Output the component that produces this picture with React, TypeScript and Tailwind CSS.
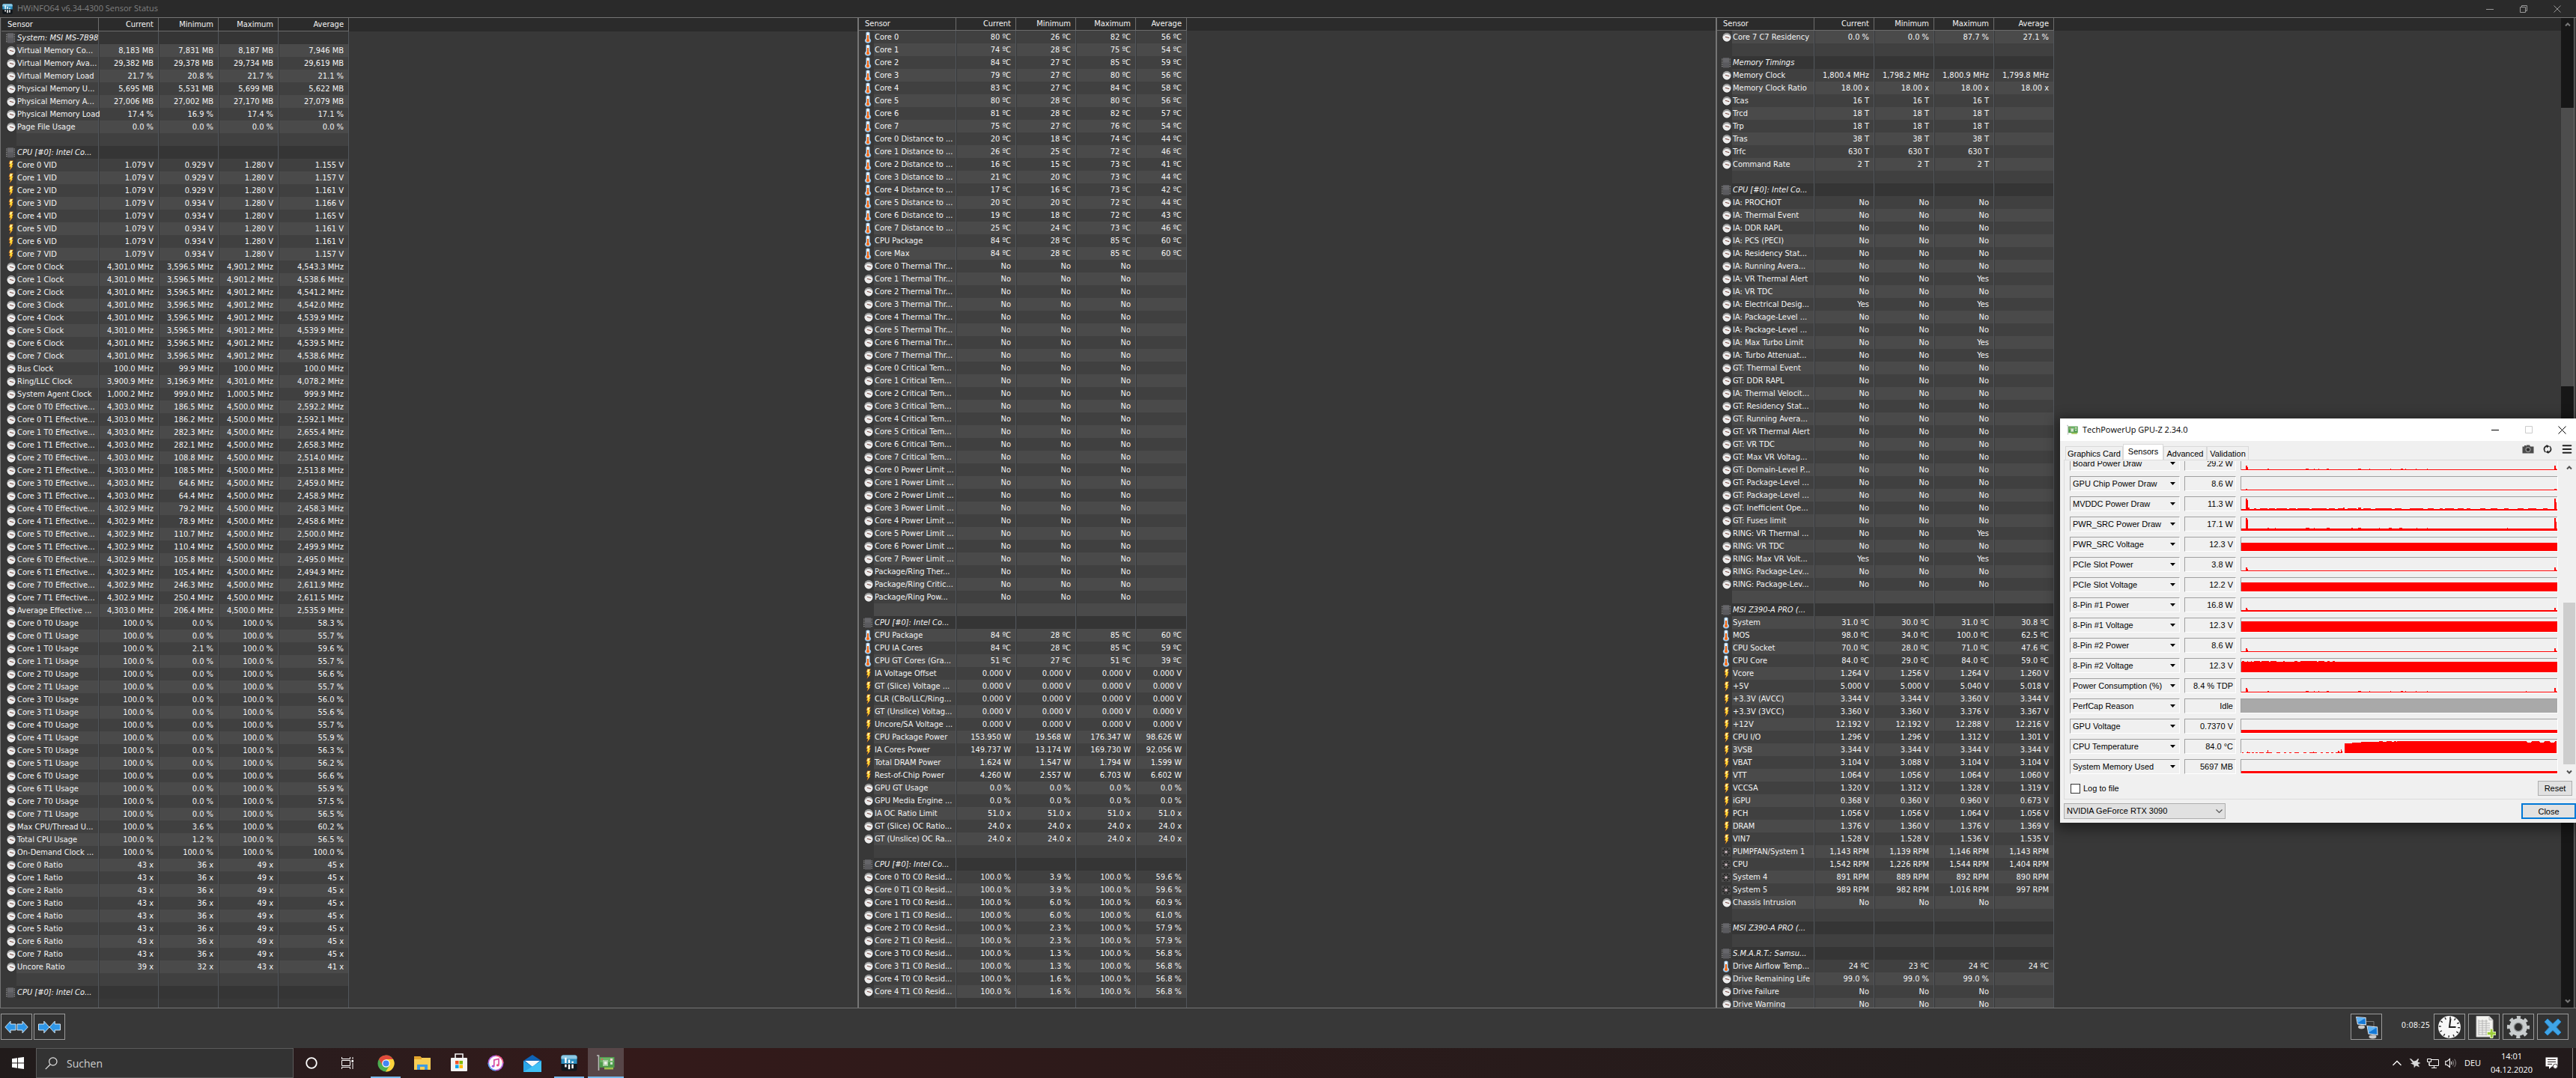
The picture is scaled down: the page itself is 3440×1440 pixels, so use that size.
import React from "react";
import { Menu } from "lucide-react";

type IconName = "gauge" | "bolt" | "temp" | "fan" | "chip";

interface SensorRow {
  kind: "row" | "section" | "blank";
  icon?: IconName;
  name?: string;
  values?: string[];
}

const row = (icon: IconName, name: string, ...values: string[]): SensorRow => ({ kind: "row", icon, name, values });
const g = (name: string, ...values: string[]) => row("gauge", name, ...values);
const v = (name: string, ...values: string[]) => row("bolt", name, ...values);
const t = (name: string, ...values: string[]) => row("temp", name, ...values);
const f = (name: string, ...values: string[]) => row("fan", name, ...values);
const section = (name: string): SensorRow => ({ kind: "section", icon: "chip", name });
const blank: SensorRow = { kind: "blank" };

const withUnit = (unit: string, ...values: string[]) => values.map((x) => `${x} ${unit}`);

const vids = [
  ["0.929", "1.155"], ["0.929", "1.157"], ["0.929", "1.161"], ["0.934", "1.166"],
  ["0.934", "1.165"], ["0.934", "1.161"], ["0.934", "1.161"], ["0.934", "1.157"],
];
const clocks = ["4,543.3", "4,538.6", "4,541.2", "4,542.0", "4,539.9", "4,539.9", "4,539.5", "4,538.6"];
const effective = [
  ["4,303.0", "186.5", "2,592.2"], ["4,303.0", "186.2", "2,592.1"],
  ["4,303.0", "282.3", "2,655.4"], ["4,303.0", "282.1", "2,658.3"],
  ["4,303.0", "108.8", "2,514.0"], ["4,303.0", "108.5", "2,513.8"],
  ["4,303.0", "64.6", "2,459.0"], ["4,303.0", "64.4", "2,458.9"],
  ["4,302.9", "79.2", "2,458.3"], ["4,302.9", "78.9", "2,458.6"],
  ["4,302.9", "110.7", "2,500.0"], ["4,302.9", "110.4", "2,499.9"],
  ["4,302.9", "105.8", "2,495.0"], ["4,302.9", "105.4", "2,494.9"],
  ["4,302.9", "246.3", "2,611.9"], ["4,302.9", "250.4", "2,611.5"],
];
const usage = [
  ["0.0", "58.3"], ["0.0", "55.7"], ["2.1", "59.6"], ["0.0", "55.7"],
  ["0.0", "56.6"], ["0.0", "55.7"], ["0.0", "56.0"], ["0.0", "55.6"],
  ["0.0", "55.7"], ["0.0", "55.9"], ["0.0", "56.3"], ["0.0", "56.2"],
  ["0.0", "56.6"], ["0.0", "55.9"], ["0.0", "57.5"], ["0.0", "56.5"],
];
const cores = [0, 1, 2, 3, 4, 5, 6, 7];
const thread = (i: number) => `Core ${Math.floor(i / 2)} T${i % 2}`;

const leftRows: SensorRow[] = [
  section("System: MSI MS-7B98"),
  g("Virtual Memory Co...", "8,183 MB", "7,831 MB", "8,187 MB", "7,946 MB"),
  g("Virtual Memory Ava...", "29,382 MB", "29,378 MB", "29,734 MB", "29,619 MB"),
  g("Virtual Memory Load", "21.7 %", "20.8 %", "21.7 %", "21.1 %"),
  g("Physical Memory U...", "5,695 MB", "5,531 MB", "5,699 MB", "5,622 MB"),
  g("Physical Memory A...", "27,006 MB", "27,002 MB", "27,170 MB", "27,079 MB"),
  g("Physical Memory Load", "17.4 %", "16.9 %", "17.4 %", "17.1 %"),
  g("Page File Usage", "0.0 %", "0.0 %", "0.0 %", "0.0 %"),
  blank,
  section("CPU [#0]: Intel Co..."),
  ...vids.map(([min, avg], i) => v(`Core ${i} VID`, ...withUnit("V", "1.079", min, "1.280", avg))),
  ...clocks.map((avg, i) => g(`Core ${i} Clock`, ...withUnit("MHz", "4,301.0", "3,596.5", "4,901.2", avg))),
  g("Bus Clock", "100.0 MHz", "99.9 MHz", "100.0 MHz", "100.0 MHz"),
  g("Ring/LLC Clock", "3,900.9 MHz", "3,196.9 MHz", "4,301.0 MHz", "4,078.2 MHz"),
  g("System Agent Clock", "1,000.2 MHz", "999.0 MHz", "1,000.5 MHz", "999.9 MHz"),
  ...effective.map(([cur, min, avg], i) => g(`${thread(i)} Effective...`, ...withUnit("MHz", cur, min, "4,500.0", avg))),
  g("Average Effective ...", "4,303.0 MHz", "206.4 MHz", "4,500.0 MHz", "2,535.9 MHz"),
  ...usage.map(([min, avg], i) => g(`${thread(i)} Usage`, ...withUnit("%", "100.0", min, "100.0", avg))),
  g("Max CPU/Thread U...", "100.0 %", "3.6 %", "100.0 %", "60.2 %"),
  g("Total CPU Usage", "100.0 %", "1.2 %", "100.0 %", "56.5 %"),
  g("On-Demand Clock ...", "100.0 %", "100.0 %", "100.0 %", "100.0 %"),
  ...cores.map((i) => g(`Core ${i} Ratio`, "43 x", "36 x", "49 x", "45 x")),
  g("Uncore Ratio", "39 x", "32 x", "43 x", "41 x"),
  blank,
  section("CPU [#0]: Intel Co..."),
];

const coreTemps = [
  ["80", "26", "82", "56"], ["74", "28", "75", "54"], ["84", "27", "85", "59"], ["79", "27", "80", "56"],
  ["83", "27", "84", "58"], ["80", "28", "80", "56"], ["81", "28", "82", "57"], ["75", "27", "76", "54"],
];
const distances = [
  ["20", "18", "74", "44"], ["26", "25", "72", "46"], ["16", "15", "73", "41"], ["21", "20", "73", "44"],
  ["17", "16", "73", "42"], ["20", "20", "72", "44"], ["19", "18", "72", "43"], ["25", "24", "73", "46"],
];
const residency = [
  ["3.9", "59.6"], ["3.9", "59.6"], ["6.0", "60.9"], ["6.0", "61.0"], ["2.3", "57.9"],
  ["2.3", "57.9"], ["1.3", "56.8"], ["1.3", "56.8"], ["1.6", "56.8"], ["1.6", "56.8"],
];
const no = ["No", "No", "No"];
const zeroV = ["0.000 V", "0.000 V", "0.000 V", "0.000 V"];

const middleRows: SensorRow[] = [
  ...coreTemps.map((x, i) => t(`Core ${i}`, ...withUnit("ºC", ...x))),
  ...distances.map((x, i) => t(`Core ${i} Distance to ...`, ...withUnit("ºC", ...x))),
  t("CPU Package", "84 ºC", "28 ºC", "85 ºC", "60 ºC"),
  t("Core Max", "84 ºC", "28 ºC", "85 ºC", "60 ºC"),
  ...cores.map((i) => g(`Core ${i} Thermal Thr...`, ...no)),
  ...cores.map((i) => g(`Core ${i} Critical Tem...`, ...no)),
  ...cores.map((i) => g(`Core ${i} Power Limit ...`, ...no)),
  g("Package/Ring Ther...", ...no),
  g("Package/Ring Critic...", ...no),
  g("Package/Ring Pow...", ...no),
  blank,
  section("CPU [#0]: Intel Co..."),
  t("CPU Package", "84 ºC", "28 ºC", "85 ºC", "60 ºC"),
  t("CPU IA Cores", "84 ºC", "28 ºC", "85 ºC", "59 ºC"),
  t("CPU GT Cores (Gra...", "51 ºC", "27 ºC", "51 ºC", "39 ºC"),
  v("IA Voltage Offset", ...zeroV),
  v("GT (Slice) Voltage ...", ...zeroV),
  v("CLR (CBo/LLC/Ring...", ...zeroV),
  v("GT (Unslice) Voltag...", ...zeroV),
  v("Uncore/SA Voltage ...", ...zeroV),
  v("CPU Package Power", "153.950 W", "19.568 W", "176.347 W", "98.626 W"),
  v("IA Cores Power", "149.737 W", "13.174 W", "169.730 W", "92.056 W"),
  v("Total DRAM Power", "1.624 W", "1.547 W", "1.794 W", "1.599 W"),
  v("Rest-of-Chip Power", "4.260 W", "2.557 W", "6.703 W", "6.602 W"),
  g("GPU GT Usage", "0.0 %", "0.0 %", "0.0 %", "0.0 %"),
  g("GPU Media Engine ...", "0.0 %", "0.0 %", "0.0 %", "0.0 %"),
  g("IA OC Ratio Limit", "51.0 x", "51.0 x", "51.0 x", "51.0 x"),
  g("GT (Slice) OC Ratio...", "24.0 x", "24.0 x", "24.0 x", "24.0 x"),
  g("GT (Unslice) OC Ra...", "24.0 x", "24.0 x", "24.0 x", "24.0 x"),
  blank,
  section("CPU [#0]: Intel Co..."),
  ...residency.map(([min, avg], i) => g(`${thread(i)} C0 Resid...`, ...withUnit("%", "100.0", min, "100.0", avg))),
];

const rightRows: SensorRow[] = [
  g("Core 7 C7 Residency", "0.0 %", "0.0 %", "87.7 %", "27.1 %"),
  blank,
  section("Memory Timings"),
  g("Memory Clock", "1,800.4 MHz", "1,798.2 MHz", "1,800.9 MHz", "1,799.8 MHz"),
  g("Memory Clock Ratio", "18.00 x", "18.00 x", "18.00 x", "18.00 x"),
  g("Tcas", "16 T", "16 T", "16 T"),
  g("Trcd", "18 T", "18 T", "18 T"),
  g("Trp", "18 T", "18 T", "18 T"),
  g("Tras", "38 T", "38 T", "38 T"),
  g("Trfc", "630 T", "630 T", "630 T"),
  g("Command Rate", "2 T", "2 T", "2 T"),
  blank,
  section("CPU [#0]: Intel Co..."),
  g("IA: PROCHOT", ...no),
  g("IA: Thermal Event", ...no),
  g("IA: DDR RAPL", ...no),
  g("IA: PCS (PECI)", ...no),
  g("IA: Residency Stat...", ...no),
  g("IA: Running Avera...", ...no),
  g("IA: VR Thermal Alert", "No", "No", "Yes"),
  g("IA: VR TDC", ...no),
  g("IA: Electrical Desig...", "Yes", "No", "Yes"),
  g("IA: Package-Level ...", ...no),
  g("IA: Package-Level ...", ...no),
  g("IA: Max Turbo Limit", "No", "No", "Yes"),
  g("IA: Turbo Attenuat...", "No", "No", "Yes"),
  g("GT: Thermal Event", ...no),
  g("GT: DDR RAPL", ...no),
  g("IA: Thermal Velocit...", ...no),
  g("GT: Residency Stat...", ...no),
  g("GT: Running Avera...", ...no),
  g("GT: VR Thermal Alert", ...no),
  g("GT: VR TDC", ...no),
  g("GT: Max VR Voltag...", ...no),
  g("GT: Domain-Level P...", ...no),
  g("GT: Package-Level ...", ...no),
  g("GT: Package-Level ...", ...no),
  g("GT: Inefficient Ope...", ...no),
  g("GT: Fuses limit", ...no),
  g("RING: VR Thermal ...", "No", "No", "Yes"),
  g("RING: VR TDC", ...no),
  g("RING: Max VR Volt...", "Yes", "No", "Yes"),
  g("RING: Package-Lev...", ...no),
  g("RING: Package-Lev...", ...no),
  blank,
  section("MSI Z390-A PRO (..."),
  t("System", "31.0 ºC", "30.0 ºC", "31.0 ºC", "30.8 ºC"),
  t("MOS", "98.0 ºC", "34.0 ºC", "100.0 ºC", "62.5 ºC"),
  t("CPU Socket", "70.0 ºC", "28.0 ºC", "71.0 ºC", "47.6 ºC"),
  t("CPU Core", "84.0 ºC", "29.0 ºC", "84.0 ºC", "59.0 ºC"),
  v("Vcore", "1.264 V", "1.256 V", "1.264 V", "1.260 V"),
  v("+5V", "5.000 V", "5.000 V", "5.040 V", "5.018 V"),
  v("+3.3V (AVCC)", "3.344 V", "3.344 V", "3.360 V", "3.344 V"),
  v("+3.3V (3VCC)", "3.360 V", "3.360 V", "3.376 V", "3.367 V"),
  v("+12V", "12.192 V", "12.192 V", "12.288 V", "12.216 V"),
  v("CPU I/O", "1.296 V", "1.296 V", "1.312 V", "1.301 V"),
  v("3VSB", "3.344 V", "3.344 V", "3.344 V", "3.344 V"),
  v("VBAT", "3.104 V", "3.088 V", "3.104 V", "3.104 V"),
  v("VTT", "1.064 V", "1.056 V", "1.064 V", "1.060 V"),
  v("VCCSA", "1.320 V", "1.312 V", "1.328 V", "1.319 V"),
  v("iGPU", "0.368 V", "0.360 V", "0.960 V", "0.673 V"),
  v("PCH", "1.056 V", "1.056 V", "1.064 V", "1.056 V"),
  v("DRAM", "1.376 V", "1.360 V", "1.376 V", "1.369 V"),
  v("VIN7", "1.528 V", "1.528 V", "1.536 V", "1.535 V"),
  f("PUMPFAN/System 1", "1,143 RPM", "1,139 RPM", "1,146 RPM", "1,143 RPM"),
  f("CPU", "1,542 RPM", "1,226 RPM", "1,544 RPM", "1,404 RPM"),
  f("System 4", "891 RPM", "889 RPM", "892 RPM", "890 RPM"),
  f("System 5", "989 RPM", "982 RPM", "1,016 RPM", "997 RPM"),
  g("Chassis Intrusion", ...no),
  blank,
  section("MSI Z390-A PRO (..."),
  blank,
  section("S.M.A.R.T.: Samsu..."),
  t("Drive Airflow Temp...", "24 ºC", "23 ºC", "24 ºC", "24 ºC"),
  g("Drive Remaining Life", "99.0 %", "99.0 %", "99.0 %"),
  g("Drive Failure", ...no),
  g("Drive Warning", ...no),
];

const SensorIcon: React.FC<{ name: IconName }> = ({ name }) => {
  if (name === "gauge") {
    return (
      <svg className="block size-3.5" viewBox="0 0 14 14">
        <circle cx="7" cy="7" r="6.2" fill="#1f1f1f" />
        <circle cx="7" cy="6.6" r="5.8" fill="#a4a4a4" />
        <circle cx="7" cy="7.2" r="5.2" fill="#ececec" />
        <path d="M3 4.4 A5 5 0 0 1 11 4.4" fill="none" stroke="#4a4a4a" strokeWidth="1" strokeDasharray="1.2 0.7" />
        <path d="M5 6.2 L10.2 7.8" stroke="#7c4a42" strokeWidth="1.1" />
      </svg>
    );
  }
  if (name === "bolt") {
    return (
      <svg className="block size-3.5" viewBox="0 0 14 14">
        <path d="M5.2 0.4 H9.8 L8.2 4.2 H9.8 L8.2 8 H9.4 L4.6 14 L6 9 H4 L5.2 5.2 H3.6 Z" fill="#d9741c" />
        <path d="M5.8 1 H9 L7.4 4.8 H9 L7.4 8.4 H8.4 L5.6 12 L6.6 8.4 H4.9 L6 4.6 H4.6 Z" fill="#ffe23a" />
        <path d="M6 1.2 H8.4 L7 4.4 H5 Z" fill="#fff3b0" />
      </svg>
    );
  }
  if (name === "temp") {
    return (
      <svg className="block h-4 w-3.5" viewBox="0 0 14 16">
        <path d="M3.4 1.4 Q6 -0.6 8.6 1.4 V9.2 Q10.4 11 10.2 12.8 Q9.4 15.8 6 15.8 Q2.6 15.8 1.8 12.8 Q1.6 11 3.4 9.2 Z" fill="#8dbbe0" />
        <path d="M4.4 1.8 Q6 0.8 7.6 1.8 V9.8 Q9 11 8.8 12.6 Q8 14.6 6 14.6 Q4 14.6 3.2 12.6 Q3 11 4.4 9.8 Z" fill="#eef6fc" />
        <rect x="5" y="5" width="2" height="6" fill="#f0640f" />
        <circle cx="6" cy="12" r="2" fill="#f0640f" />
      </svg>
    );
  }
  if (name === "fan") {
    return (
      <svg className="block size-3" viewBox="0 0 12 12">
        <rect width="12" height="12" fill="#4c4c4c" />
        <circle cx="6" cy="6" r="5.4" fill="#262626" />
        <path d="M6 1 V11 M1 6 H11 M2.4 2.4 L9.6 9.6 M9.6 2.4 L2.4 9.6" stroke="#6d6868" strokeWidth="1" />
        <circle cx="6" cy="6" r="1.6" fill="#d8c4cc" />
      </svg>
    );
  }
  return (
    <svg className="block h-3.5 w-3" viewBox="0 0 12 14">
      <path d="M0.8 1.5 V13 M11.2 1.5 V13" stroke="#8c8c8c" strokeWidth="1.6" strokeDasharray="1.2 1.2" />
      <rect x="2" y="0.5" width="8" height="13" fill="#5a5a5e" />
      <rect x="2" y="0.5" width="8" height="6" fill="#66666a" />
    </svg>
  );
};

interface SensorPanelProps {
  rows: SensorRow[];
  frame: string;
  headHeight: string;
  averageWidth: string;
  firstLight?: boolean;
}

const headings = ["Current", "Minimum", "Maximum", "Average"];

const SensorPanel: React.FC<SensorPanelProps> = ({ rows, frame, headHeight, averageWidth, firstLight = false }) => {
  const background = (item: SensorRow, index: number) => {
    if (item.kind === "section") return "bg-[#353535]";
    return (index % 2 === 0) === firstLight ? "bg-[#4a4a4a]" : "bg-[#404040]";
  };

  return (
    <section className={`min-w-0 overflow-hidden ${frame}`}>
      <table className="w-full table-fixed border-separate border-spacing-0 text-[11px] leading-[17px] text-[#f4f4f4]">
        <colgroup>
          <col className="w-5" />
          <col className="w-[110px]" />
          <col className="w-20" />
          <col className="w-20" />
          <col className="w-20" />
          <col className={averageWidth} />
          <col />
        </colgroup>
        <thead>
          <tr className={`bg-[#2b2b2b] ${headHeight}`}>
            <th colSpan={2} className="border-r border-b border-[#6c6c6c] p-0 pl-2 text-left leading-4 font-normal">
              Sensor
            </th>
            {headings.map((heading) => (
              <th key={heading} className="border-r border-b border-[#6c6c6c] p-0 pr-1.5 text-right leading-4 font-normal">
                {heading}
              </th>
            ))}
            <th className="p-0" />
          </tr>
        </thead>
        <tbody>
          {rows.map((item, index) => (
            <tr key={index} className="h-[17px]">
              <td className="p-0 pl-1.5">{item.icon && <SensorIcon name={item.icon} />}</td>
              <td
                className={`border-r border-r-[#51565c] p-0 pl-px whitespace-nowrap ${background(item, index)} ${
                  item.kind === "section" ? "italic" : ""
                }`}
              >
                {item.name}
              </td>
              {headings.map((heading, i) => (
                <td
                  key={heading}
                  className={`border-r border-l border-r-[#51565c] border-l-[#383838] p-0 pr-1.5 text-right whitespace-nowrap ${background(item, index)}`}
                >
                  {item.values?.[i]}
                </td>
              ))}
              <td className="p-0" />
            </tr>
          ))}
          {/* keeps the column lines running to the bottom edge */}
          <tr className="h-10">
            <td className="p-0" />
            <td className="border-r border-r-[#51565c] p-0" />
            {headings.map((heading) => (
              <td key={heading} className="border-r border-r-[#51565c] p-0" />
            ))}
            <td className="p-0" />
          </tr>
        </tbody>
      </table>
    </section>
  );
};

// small bumps shared by the power graphs
const bumps = "M36 17h2v1h-2z M87 17h4v1h-4z M98 17h1v1h-1z M104 17h1v1h-1z M115 17h3v1h-3z M157 17h4v1h-4z M172 17h1v1h-1z M200 17h1v1h-1z M214 17h3v1h-3z M220 17h1v1h-1z M234 17h1v1h-1z M249 17h1v1h-1z";

const spikes = (top: number) =>
  `M7 19V${top}h2V${top + 2}h1V19z M419 19V${top}h2V19z M421 19V${Math.min(top + 5, 17)}h1V19z`;
const fill = (top: number) => `M1 ${top}H423V19H1z`;

interface GpuSensor {
  name: string;
  value: string;
  graph: string;
}

const gpuSensors: GpuSensor[] = [
  { name: "Board Power Draw", value: "29.2 W", graph: fill(18) + spikes(13) + bumps },
  { name: "GPU Chip Power Draw", value: "8.6 W", graph: fill(18) + spikes(17) },
  {
    name: "MVDDC Power Draw",
    value: "11.3 W",
    graph:
      fill(17) + spikes(3) +
      "M10 15h2v2h-2z M18 16h3v1h-3z M26 16h10v1h-10z M38 16h8v1h-8z M48 16h14v1h-14z M65 16h9v1h-9z M76 16h16v1h-16z M95 16h20v1h-20z M118 16h8v1h-8z M130 16h9v1h-9z M137 15h2v1h-2z M143 16h12v1h-12z M157 15h4v2h-4z M164 16h10v1h-10z M180 16h22v1h-22z M206 16h9v1h-9z M226 16h18v1h-18z M250 16h8v1h-8z M266 16h4v1h-4z M273 16h12v1h-12z M290 16h8v1h-8z M302 16h5v1h-5z M320 16h7v1h-7z M334 16h9v1h-9z M352 16h6v1h-6z M370 16h8v1h-8z M384 16h11v1h-11z M404 16h6v1h-6z",
  },
  {
    name: "PWR_SRC Power Draw",
    value: "17.1 W",
    graph:
      fill(16) + spikes(2) +
      "M36 15h2v1h-2z M46 15h1v1h-1z M87 15h5v1h-5z M98 15h1v1h-1z M115 15h4v1h-4z M148 15h2v1h-2z M157 15h4v1h-4z M185 15h1v1h-1z M198 15h4v1h-4z M212 15h4v1h-4z M235 15h1v1h-1z M249 15h1v1h-1z M356 15h1v1h-1z",
  },
  { name: "PWR_SRC Voltage", value: "12.3 V", graph: fill(8) },
  { name: "PCIe Slot Power", value: "3.8 W", graph: fill(18) + spikes(14) },
  { name: "PCIe Slot Voltage", value: "12.2 V", graph: fill(7) },
  { name: "8-Pin #1 Power", value: "16.8 W", graph: fill(17) + spikes(14) },
  { name: "8-Pin #1 Voltage", value: "12.3 V", graph: fill(5) },
  { name: "8-Pin #2 Power", value: "8.6 W", graph: fill(18) + spikes(14) },
  {
    name: "8-Pin #2 Voltage",
    value: "12.3 V",
    graph:
      fill(5) +
      "M2 4h3v1h-3z M9 4h1v1h-1z M14 4h1v1h-1z M18 4h8v1h-8z M28 4h10v1h-10z M40 4h8v1h-8z M57 4h2v1h-2z M72 4h4v1h-4z M80 4h22v1h-22z M104 4h8v1h-8z M116 4h3v1h-3z M123 4h3v1h-3z",
  },
  { name: "Power Consumption (%)", value: "8.4 % TDP", graph: fill(18) + spikes(13) + bumps + "M381 17h1v1h-1z" },
  { name: "PerfCap Reason", value: "Idle", graph: "" },
  { name: "GPU Voltage", value: "0.7370 V", graph: fill(15) },
  {
    name: "CPU Temperature",
    value: "84.0 °C",
    graph:
      "M139 19V6h10V5h12V4h24V3h5v1h5v-1h7v1h3v-1h3v1h1v-1H382v1h1v1h5v-1h1v-1h10v1h1v1h5v-1h1v-1h7v1h1v1h5v-1h1v-1h2V19z M134 19v-5h1v2h1v3z M130 19v-3h2v3z M2 18h2v1h-2z M8 18h5v1h-5z M9 17h1v1h-1z M15 18h3v1h-3z M20 18h3v1h-3z M25 18h6v1h-6z M36 15h1v4h-1z M34 18h8v1h-8z M48 18h5v1h-5z M58 18h3v1h-3z M65 18h3v1h-3z M72 18h6v1h-6z M84 18h4v1h-4z M92 18h10v1h-10z M97 17h1v1h-1z M107 18h3v1h-3z M114 18h4v1h-4z M121 18h3v1h-3z M127 18h7v1h-7z",
  },
  { name: "System Memory Used", value: "5697 MB", graph: fill(16) },
];

const sunken = "border border-t-[#a0a0a0] border-r-white border-b-white border-l-[#a0a0a0]";

const GpuSensorRow: React.FC<GpuSensor> = ({ name, value, graph }) => (
  <div className="flex h-5 shrink-0 gap-1.5">
    <div className="relative w-[147px]">
      <select
        aria-label={name}
        className={`block h-5 w-full appearance-none bg-[#f0f0f0] pl-[3px] text-[11px] leading-4 text-black ${sunken}`}
      >
        <option>{name}</option>
      </select>
      <svg className="pointer-events-none absolute top-2 right-1.5 h-1 w-[7px]" viewBox="0 0 7 4">
        <path d="M0 0 H7 L3.5 4 Z" fill="#000" />
      </svg>
    </div>
    <input
      readOnly
      aria-label={`${name} value`}
      value={value}
      className={`h-5 w-[69px] bg-[#f0f0f0] pr-[3px] text-right text-[11px] leading-4 text-black outline-none ${sunken}`}
    />
    <svg className="h-5 min-w-0 flex-1" viewBox="0 0 424 20" preserveAspectRatio="none" shapeRendering="crispEdges">
      <rect width="424" height="20" fill="#ffffff" />
      <rect width="423" height="19" fill="#a0a0a0" />
      <rect x="1" y="1" width="422" height="18" fill={graph ? "#f0f0f0" : "#a9a9a9"} />
      <path d={graph} fill="#ff0000" />
    </svg>
  </div>
);

const GpuCardIcon: React.FC<{ className: string }> = ({ className }) => (
  <svg className={className} viewBox="0 0 24 24">
    <path d="M0 2 H2.5 V22" fill="none" stroke="#b9bdb9" strokeWidth="1.6" />
    <rect x="3.5" y="4" width="20" height="14" fill="#4f9a4c" />
    <rect x="4.5" y="5" width="18" height="6" fill="#6db367" />
    <rect x="8" y="8" width="7" height="8" fill="#a9cba3" />
    <rect x="10" y="10" width="3.5" height="4" fill="#e9efe6" />
    <rect x="18" y="6" width="3" height="3" fill="#e9d5cf" />
    <rect x="18" y="11" width="3" height="3" fill="#cfe3cb" />
    <rect x="6" y="6" width="2" height="2" fill="#d7635c" />
    <rect x="10" y="18" width="12" height="2.5" fill="#9fc24c" />
  </svg>
);

const Tab: React.FC<{ label: string; selected?: boolean; width: string }> = ({ label, selected, width }) => (
  <button
    role="tab"
    aria-selected={selected ? true : false}
    className={`border border-b-0 border-[#d9d9d9] text-[11px] leading-4 text-black ${width} ${
      selected ? "h-[21px] bg-white pb-0.5" : "h-[18px] bg-[#f0f0f0]"
    }`}
  >
    {label}
  </button>
);

const GpuWindow: React.FC = () => (
  <div className="absolute top-[559px] right-0 w-[689px] bg-[#f0f0f0] font-['Liberation_Sans',Arial,sans-serif] text-black shadow-[0_4px_16px_4px_rgba(0,0,0,0.45)]">
    <div className="flex h-[30px] items-center bg-white pl-[9px] font-['Open_Sans','Noto_Sans',sans-serif] text-[11px]">
      <GpuCardIcon className="mr-1.5 size-[15px]" />
      <h2 className="flex-1">TechPowerUp GPU-Z 2.34.0</h2>
      <button aria-label="Minimize" className="flex h-full w-[45px] items-center justify-center">
        <svg className="size-2.5" viewBox="0 0 10 10"><path d="M0 5.5 H10" stroke="#000" /></svg>
      </button>
      <button aria-label="Maximize" className="flex h-full w-[45px] items-center justify-center">
        <svg className="size-2.5" viewBox="0 0 10 10"><path d="M0.5 0.5 H9.5 V9.5 H0.5 Z" fill="none" stroke="#ccc" /></svg>
      </button>
      <button aria-label="Close window" className="flex h-full w-[41px] items-center justify-center pl-1">
        <svg className="size-[11px]" viewBox="0 0 11 11"><path d="M0.5 0.5 L10.5 10.5 M10.5 0.5 L0.5 10.5" stroke="#000" /></svg>
      </button>
    </div>

    <div className="flex h-[25px] items-end pl-[7px]">
      <div role="tablist" className="flex flex-1 items-end">
        <Tab label="Graphics Card" width="w-[77px]" />
        <Tab label="Sensors" width="w-[54px]" selected />
        <Tab label="Advanced" width="w-[58px]" />
        <Tab label="Validation" width="w-14" />
      </div>
      <div className="flex items-center gap-3 self-start pt-[3px] pr-1">
        <button aria-label="Screenshot">
          <svg className="block h-3 w-4" viewBox="0 0 16 12">
            <path d="M0.5 2.5 H3 V1 H5 V2.5 L6 0.5 H10 L11 2.5 H15.5 V11.5 H0.5 Z" fill="#4b4b4b" />
            <circle cx="8" cy="6.6" r="3.6" fill="#8f8f8f" />
            <circle cx="8" cy="6.6" r="2.2" fill="#2c2c2c" />
          </svg>
        </button>
        <button aria-label="Refresh">
          <svg className="block size-3" viewBox="0 0 12 12">
            <path d="M1.6 7 A4.4 4.4 0 0 1 5.4 1.6 M10.4 5 A4.4 4.4 0 0 1 6.6 10.4" fill="none" stroke="#222" strokeWidth="1.8" />
            <path d="M4.6 0 L8.4 2 L5 4.6 Z M7.4 12 L3.6 10 L7 7.4 Z" fill="#222" />
            <path d="M1.6 7 Q2 9 3.4 10 M10.4 5 Q10 3 8.6 2" fill="none" stroke="#222" strokeWidth="1.4" />
          </svg>
        </button>
        <button aria-label="Menu"><Menu className="block size-4" stroke="#222" strokeWidth={3} /></button>
      </div>
    </div>

    <div className="ml-[5px] border border-r-0 border-[#dcdcdc]">
      <div className="flex h-[424px] overflow-hidden pt-px pl-[7px]">
        <div className="flex min-w-0 flex-1 flex-col justify-end gap-[7px] overflow-hidden pr-[7px] pb-[5px]">
          {gpuSensors.map((sensor) => (
            <GpuSensorRow key={sensor.name} {...sensor} />
          ))}
        </div>
        <div className="mr-px flex w-4 flex-col items-center">
          <svg className="mt-px h-4 w-2 shrink-0" viewBox="0 0 8 16"><path d="M1 9.5 L4 6.5 L7 9.5" fill="none" stroke="#505050" strokeWidth="2" /></svg>
          <div className="mt-[172px] h-[216px] w-full shrink-0 bg-[#cdcdcd]" />
          <svg className="mt-0.5 h-4 w-2 shrink-0" viewBox="0 0 8 16"><path d="M1 6.5 L4 9.5 L7 6.5" fill="none" stroke="#505050" strokeWidth="2" /></svg>
        </div>
      </div>
      <div className="flex h-7 items-center justify-between pr-[5px] pl-2">
        <label className="flex items-center gap-1 text-[11px]">
          <input type="checkbox" className="size-[13px] appearance-none border border-[#333] bg-white" />
          Log to file
        </label>
        <button className="h-5 w-[46px] border border-[#adadad] bg-[#e1e1e1] text-[11px]">Reset</button>
      </div>
    </div>

    <div className="flex h-[31px] items-center justify-between pl-[5px]">
      <div className="relative">
        <select
          aria-label="Graphics card"
          className="block h-[21px] w-[216px] appearance-none border border-[#adadad] bg-[#e1e1e1] pl-[3px] text-[11px]"
        >
          <option>NVIDIA GeForce RTX 3090</option>
        </select>
        <svg className="pointer-events-none absolute top-2 right-1 h-1.5 w-[9px]" viewBox="0 0 9 6">
          <path d="M0.5 0.5 L4.5 4.5 L8.5 0.5" fill="none" stroke="#555" strokeWidth="1.1" />
        </svg>
      </div>
      <button className="h-[21px] w-[73px] border-2 border-[#0078d7] bg-[#e1e1e1] text-[11px] leading-4">Close</button>
    </div>
  </div>
);

const ToolButton: React.FC<{ label: string; children: React.ReactNode }> = ({ label, children }) => (
  <button
    aria-label={label}
    className="flex h-[35px] w-[42px] items-center justify-center border border-[#9a9a9a] bg-[#323232]"
  >
    {children}
  </button>
);

const Toolbar: React.FC = () => (
  <div className="flex h-[54px] shrink-0 items-start justify-between border-t border-[#757575] pt-[7px] pr-2.5 pl-px">
    <div className="flex gap-0.5">
      <ToolButton label="Expand columns">
        <svg className="h-[18px] w-8" viewBox="0 0 32 18">
          <path d="M0.8 9 L8 1.2 V5 H15 V13 H8 V16.8 Z M31.2 9 L24 1.2 V5 H17 V13 H24 V16.8 Z" fill="#2f97e8" stroke="#d3e6f4" />
        </svg>
      </ToolButton>
      <ToolButton label="Shrink columns">
        <svg className="h-[18px] w-8" viewBox="0 0 32 18">
          <path d="M16 9 L8.8 1.2 V5 H1.5 V13 H8.8 V16.8 Z M16 9 L23.2 1.2 V5 H30.5 V13 H23.2 V16.8 Z" fill="#2f97e8" stroke="#d3e6f4" />
        </svg>
      </ToolButton>
    </div>
    <div className="flex items-start gap-1">
      <ToolButton label="Remote sensors">
        <svg className="h-8 w-9" viewBox="0 0 36 32">
          <path d="M18 8.5 H28 V15" fill="none" stroke="#777" strokeWidth="1" />
          <ellipse cx="11.5" cy="16" rx="4.5" ry="2.4" fill="#c9c9c9" />
          <path d="M4 2 L17.5 3 L18 13.5 L6 12.5 Z" fill="#dfe9f2" />
          <path d="M5 3 L16.5 4 L17 12.3 L7 11.5 Z" fill="#1579d6" />
          <path d="M5 3 L16.5 4 L7 10 Z" fill="#62b4f5" />
          <ellipse cx="26.5" cy="29" rx="5" ry="2.4" fill="#c9c9c9" />
          <path d="M18.5 14 L33 15.5 L33.5 27 L20.5 25.6 Z" fill="#dfe9f2" />
          <path d="M19.7 15.2 L32 16.5 L32.4 25.7 L21.5 24.5 Z" fill="#1579d6" />
          <path d="M19.7 15.2 L32 16.5 L21.5 23 Z" fill="#62b4f5" />
        </svg>
      </ToolButton>
      <time className="w-[61px] pt-2 pr-px text-right text-[11px] leading-4 text-[#f0f0f0]">0:08:25</time>
      <ToolButton label="Reset clock">
        <svg className="size-8" viewBox="0 0 32 32">
          <circle cx="16" cy="16" r="15" fill="#f7f7f7" />
          <circle cx="16" cy="16" r="12.6" fill="none" stroke="#2a2a2a" strokeWidth="3" strokeDasharray="1.4 5.2" />
          <path d="M17.5 4.5 L16 16 H24.5" fill="none" stroke="#1d1d1d" strokeWidth="2" />
        </svg>
      </ToolButton>
      <ToolButton label="Start logging">
        <svg className="size-8" viewBox="0 0 32 32">
          <path d="M6 1.5 H23 L28 6.5 V29 H6 Z" fill="#f3f3f0" stroke="#bdbdbd" />
          <path d="M23 1.5 V6.5 H28" fill="#ddd" stroke="#b5b5b5" />
          <path d="M9 8 H21 M9 11 H24 M9 14 H24 M9 17 H24 M9 20 H24 M9 23 H20 M9 26 H20 M9 6 V27 M14 6 V27 M19 6 V27" stroke="#b4b4b4" />
          <path d="M24.5 18.5 H28 V22.5 H32 V26.5 H28 V30.5 H24.5 V26.5 H20.5 V22.5 H24.5 Z" fill="#9ccb3b" stroke="#e6f3c4" />
        </svg>
      </ToolButton>
      <ToolButton label="Settings">
        <svg className="size-8" viewBox="0 0 32 32">
          <circle cx="16" cy="16" r="12.6" fill="none" stroke="#c6cacb" strokeWidth="5" strokeDasharray="4.9 5" strokeDashoffset="2.4" />
          <circle cx="16" cy="16" r="8.6" fill="none" stroke="#c9cdce" strokeWidth="6.4" />
          <circle cx="16" cy="16" r="5.6" fill="#303030" stroke="#8c9091" strokeWidth="1.4" />
        </svg>
      </ToolButton>
      <ToolButton label="Close sensors">
        <svg className="h-6 w-6" viewBox="0 0 24 24">
          <path d="M5 1 L12 7.6 L19 1 L23 5 L16.6 12 L23 19 L19 23 L12 16.4 L5 23 L1 19 L7.4 12 L1 5 Z" fill="#3fa4e6" stroke="#2784c8" />
        </svg>
      </ToolButton>
    </div>
  </div>
);

const TaskButton: React.FC<{ label: string; state?: "open" | "active"; children: React.ReactNode }> = ({
  label,
  state,
  children,
}) => (
  <button
    aria-label={label}
    className={`flex h-10 w-12 flex-col items-center ${state === "active" ? "bg-[#574648]" : ""}`}
  >
    <span className="flex h-[38px] items-center">{children}</span>
    {state === "open" && <span className="h-0.5 w-10 bg-[#76b9ed]" />}
    {state === "active" && <span className="h-0.5 w-full bg-[#76b9ed]" />}
  </button>
);

const HwinfoIcon: React.FC<{ className: string }> = ({ className }) => (
  <svg className={className} viewBox="0 0 24 24">
    <rect x="0.5" y="0.5" width="23" height="23" rx="3" fill="#10161b" />
    <path d="M0.5 13 V3.5 Q0.5 0.5 3.5 0.5 H20.5 Q23.5 0.5 23.5 3.5 V13 Z" fill="#2d8fc0" />
    <path d="M0.5 6 V3.5 Q0.5 0.5 3.5 0.5 H20.5 Q23.5 0.5 23.5 3.5 V6 Z" fill="#8cc7e2" />
    <path d="M7 4 V12 M12 7 V12 M17 9.5 V12 M7 14 V18 M12 14 V21 M17 14 V20" stroke="#fff" strokeWidth="2.6" />
  </svg>
);

const Taskbar: React.FC = () => (
  <div className="flex h-10 shrink-0 items-stretch bg-[linear-gradient(90deg,#211b1b_0%,#2a1c1d_12%,#341a1a_24%,#2c1a1a_45%,#231c1c_75%,#221a1b_100%)] font-['Open_Sans','Noto_Sans',sans-serif] text-white">
    <button aria-label="Start" className="flex w-12 items-center justify-center">
      <svg className="size-4" viewBox="0 0 16 16">
        <path d="M0 2.2 L7 1.2 V7.5 H0 Z M8 1 L16 0 V7.5 H8 Z M0 8.5 H7 V14.8 L0 13.8 Z M8 8.5 H16 V16 L8 14.9 Z" fill="#fff" />
      </svg>
    </button>
    <label className="flex w-[344px] items-center gap-3 border border-[#5b5b5b] bg-[#333] pl-[11px]">
      <svg className="size-[17px]" viewBox="0 0 17 17">
        <circle cx="10.8" cy="6" r="5.2" fill="none" stroke="#e6e6e6" strokeWidth="1.2" />
        <path d="M7 10 L0.8 16.2" stroke="#e6e6e6" strokeWidth="1.2" />
      </svg>
      <input
        type="text"
        aria-label="Suchen"
        placeholder="Suchen"
        className="min-w-0 flex-1 bg-transparent text-[14px] text-white outline-none placeholder:text-[#cfcfcf]"
      />
    </label>
    <TaskButton label="Cortana">
      <svg className="mt-0.5 size-4" viewBox="0 0 16 16"><circle cx="8" cy="8" r="6.8" fill="none" stroke="#fff" strokeWidth="1.8" /></svg>
    </TaskButton>
    <TaskButton label="Task view">
      <svg className="mt-0.5 size-4" viewBox="0 0 16 16">
        <path d="M0.5 0 V2.5 H11.5 V0 M0.5 16 V13.5 H11.5 V16 M0.5 4.5 H11.5 V11.5 H0.5 Z M15 0 V3 M15 8 V16" fill="none" stroke="#fff" />
        <rect x="13.5" y="4" width="2.5" height="3" fill="#fff" />
      </svg>
    </TaskButton>
    <div className="ml-[3px] flex gap-px">
      <TaskButton label="Chrome" state="open">
        <svg className="mt-0.5 size-[23px]" viewBox="0 0 24 24">
          <circle cx="12" cy="12" r="11.5" fill="#4caf50" />
          <path d="M12 6.3 H22 A11.5 11.5 0 0 1 11.5 23.5 L17 14.8 Z" fill="#fdd23c" />
          <path d="M2 6.3 L7.2 15 L12 12 L12 6.3 H22 A11.5 11.5 0 0 0 2 6.3 Z" fill="#e14a3b" />
          <circle cx="12" cy="12" r="5.5" fill="#fff" />
          <circle cx="12" cy="12" r="4.3" fill="#4285f4" />
        </svg>
      </TaskButton>
      <TaskButton label="Explorer">
        <svg className="mt-0.5 h-5 w-[22px]" viewBox="0 0 22 20">
          <path d="M0 1 H8 L10 3 H22 V19 H0 Z" fill="#f8ce55" />
          <path d="M0 1 H8 L10 3 V5 H0 Z" fill="#e2a32c" />
          <path d="M4 19 V12 H18 V19 H14 V15 H8 V19 Z" fill="#3f9be0" />
        </svg>
      </TaskButton>
      <TaskButton label="Store">
        <svg className="h-6 w-[22px]" viewBox="0 0 22 24">
          <path d="M6 7 V1 H16 V7" fill="none" stroke="#f3f3f3" strokeWidth="1.6" />
          <rect y="6" width="22" height="18" rx="1" fill="#f3f3f3" />
          <rect x="6" y="10" width="4.5" height="4.5" fill="#f25022" />
          <rect x="11.5" y="10" width="4.5" height="4.5" fill="#7fba00" />
          <rect x="6" y="15.5" width="4.5" height="4.5" fill="#00a4ef" />
          <rect x="11.5" y="15.5" width="4.5" height="4.5" fill="#ffb900" />
        </svg>
      </TaskButton>
      <TaskButton label="iTunes">
        <svg className="mt-0.5 size-[22px]" viewBox="0 0 24 24">
          <circle cx="12" cy="12" r="11.5" fill="#b05fd9" />
          <path d="M12 0.5 A11.5 11.5 0 0 1 23.5 12 L12 12 Z" fill="#f0567f" />
          <path d="M12 23.5 A11.5 11.5 0 0 1 0.5 12 L12 12 Z" fill="#5b9df0" />
          <circle cx="12" cy="12" r="9.7" fill="#fdf7fb" />
          <path d="M9.6 16.2 V7.6 L16.4 6 V14.8" fill="none" stroke="#d6459b" strokeWidth="1.7" />
          <ellipse cx="8.2" cy="16.6" rx="2" ry="1.6" fill="#a654dd" />
          <ellipse cx="15" cy="15.2" rx="2" ry="1.6" fill="#ec4a7c" />
        </svg>
      </TaskButton>
      <TaskButton label="Mail">
        <svg className="mt-0.5 h-[23px] w-6" viewBox="0 0 24 23">
          <path d="M0 8 L12 0 L24 8 V23 H0 Z" fill="#0f63b5" />
          <path d="M2 8 H22 L12 16 Z" fill="#f4f8fb" />
          <path d="M0 8 L12 16 L24 8 V23 H0 Z" fill="#2aa6e8" />
          <path d="M0 23 L24 8 V23 Z" fill="#3fc0f5" />
        </svg>
      </TaskButton>
      <TaskButton label="HWiNFO64" state="open"><HwinfoIcon className="mt-0.5 size-[22px]" /></TaskButton>
      <TaskButton label="GPU-Z" state="active"><GpuCardIcon className="mt-0.5 size-6" /></TaskButton>
    </div>
    <div className="ml-auto flex items-center text-[11px]">
      <div className="flex items-center gap-2">
        <svg className="h-4 w-4" viewBox="0 0 16 16"><path d="M2.5 11 L8 5.5 L13.5 11" fill="none" stroke="#fff" strokeWidth="1.3" /></svg>
        <svg className="h-4 w-4" viewBox="0 0 16 16">
          <path d="M0.5 2 L3 2.4 L6.2 5.4 L9.6 4.8 L12 2 L13.2 2.8 L11.4 6.6 L15.6 8 L12 9.4 L14 13.6 L9.2 11.4 L6.8 14.6 L6.4 10.4 L2 8.2 L5 7.4 Z" fill="#d8d8d8" />
        </svg>
        <svg className="h-4 w-4" viewBox="0 0 16 16">
          <path d="M5.5 3.5 H15.5 V11.5 H3 V8 M9.5 12 V14.5 M6 14.5 H13" fill="none" stroke="#fff" />
          <path d="M0.5 2.5 H5.5 V6.5 H0.5 Z M3 7 V11" fill="none" stroke="#fff" />
        </svg>
        <svg className="h-4 w-4" viewBox="0 0 16 16">
          <path d="M0.8 5.5 H3 L6.5 2.5 V13.5 L3 10.5 H0.8 Z" fill="none" stroke="#fff" strokeWidth="1.1" />
          <path d="M8.5 6 Q9.8 8 8.5 10" fill="none" stroke="#fff" />
          <path d="M10.5 4.4 Q13 8 10.5 11.6 M12.7 2.8 Q16.2 8 12.7 13.2" fill="none" stroke="#8a8585" />
        </svg>
      </div>
      <span className="w-[42px] text-center">DEU</span>
      <time className="w-[62px] text-center leading-[18px] whitespace-nowrap">14:01<br />04.12.2020</time>
      <button aria-label="Notifications" className="flex h-full w-[45px] items-center justify-center">
        <svg className="h-4 w-[17px]" viewBox="0 0 17 16">
          <path d="M0.5 0.5 H16.5 V12.5 H9 L5 16 V12.5 H0.5 Z" fill="#fff" />
          <path d="M3 3.5 H14 M3 6.5 H14 M3 9.5 H9" stroke="#2a2020" strokeWidth="1.2" />
          <circle cx="13.4" cy="12.4" r="3" fill="#fff" stroke="#2a2020" strokeWidth="0.9" />
        </svg>
      </button>
      <span className="ml-[5px] h-full w-[5px] border-l border-[#8b8686]" />
    </div>
  </div>
);

const Scrollbar: React.FC = () => (
  <div className="mr-0.5 flex w-[18px] shrink-0 flex-col items-center border-r border-[#6c6c6c] bg-[#171717]">
    <svg className="h-[18px] w-2 shrink-0" viewBox="0 0 8 18"><path d="M1 10.5 L4 7.5 L7 10.5" fill="none" stroke="#777" strokeWidth="2" /></svg>
    <div className="mt-[102px] h-[372px] w-full shrink-0 bg-[#4d4d4d]" />
    <svg className="mt-auto h-[18px] w-2 shrink-0" viewBox="0 0 8 18"><path d="M1 7.5 L4 10.5 L7 7.5" fill="none" stroke="#777" strokeWidth="2" /></svg>
  </div>
);

const App: React.FC = () => (
  <div className="relative flex h-screen flex-col overflow-hidden bg-[#383838] font-['DejaVu_Sans_Condensed','DejaVu_Sans',sans-serif]">
    <header className="flex h-[23px] shrink-0 items-center bg-[#2a2a2a] pr-[3px] pl-[3px] font-['Open_Sans','Noto_Sans',sans-serif] text-[11px] text-[#808080]">
      <HwinfoIcon className="mr-1.5 size-[14px]" />
      <h1 className="flex-1">HWiNFO64 v6.34-4300 Sensor Status</h1>
      <button aria-label="Minimize" className="flex w-[45px] justify-center">
        <svg className="size-2.5" viewBox="0 0 10 10"><path d="M0 5.5 H10" stroke="#999" /></svg>
      </button>
      <button aria-label="Restore" className="flex w-[45px] justify-center">
        <svg className="size-2.5" viewBox="0 0 10 10"><path d="M0.5 2.5 H7.5 V9.5 H0.5 Z M2.5 2 V0.5 H9.5 V7.5 H8" fill="none" stroke="#999" /></svg>
      </button>
      <button aria-label="Close" className="flex w-[45px] justify-center">
        <svg className="size-2.5" viewBox="0 0 10 10"><path d="M0.5 0.5 L9.5 9.5 M9.5 0.5 L0.5 9.5" stroke="#999" /></svg>
      </button>
    </header>

    <main className="grid min-h-0 flex-1 grid-cols-[1145fr_1146fr_1149fr] border-t border-[#757575]">
      <SensorPanel rows={leftRows} frame="border-l border-[#757575] pl-px" headHeight="h-[18px]" averageWidth="w-[94px]" />
      <SensorPanel rows={middleRows} frame="border-l-2 border-[#757575]" headHeight="h-[17px]" averageWidth="w-[68px]" />
      <div className="flex min-w-0 overflow-hidden">
        <SensorPanel rows={rightRows} frame="flex-1 border-l-2 border-[#757575]" headHeight="h-[17px]" averageWidth="w-20" firstLight />
        <Scrollbar />
      </div>
    </main>

    <Toolbar />
    <Taskbar />
    <GpuWindow />
  </div>
);

export default App;
